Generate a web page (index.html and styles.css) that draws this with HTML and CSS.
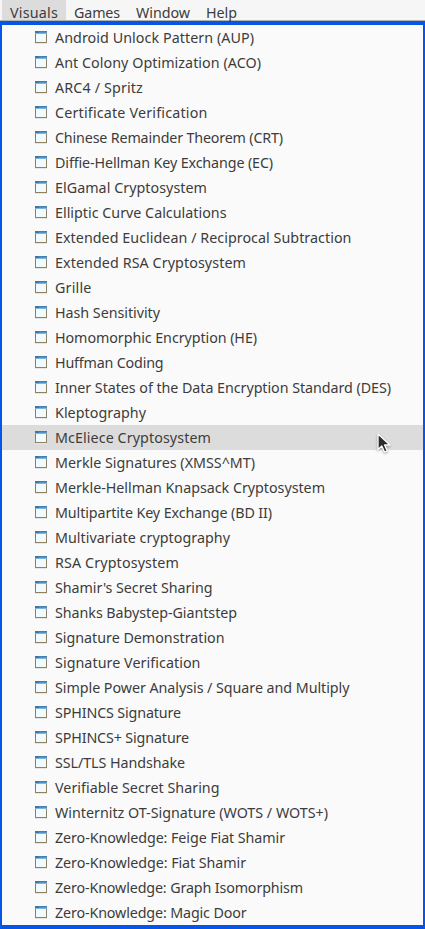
FILE: index.html
```html
<!DOCTYPE html>
<html lang="en">
<head>
<meta charset="utf-8">
<title>Visuals</title>
<link rel="stylesheet" href="styles.css">
</head>
<body>
<svg class="symbols" aria-hidden="true">
  <defs>
    <symbol id="window" viewBox="0 0 12 13">
      <rect x=".5" y=".5" width="11" height="11" fill="#f1faff" stroke="#8d8162"/>
      <rect y="3" width="1" height="4" fill="#66828a"/>
      <rect width="12" height="1" fill="#4a7fa8"/>
      <rect y="1" width="12" height="1" fill="#4f93c6"/>
      <rect y="2" width="12" height="1" fill="#7fb5dc"/>
      <rect y="0" width="4" height="2" fill="#3c77aa"/>
      <rect y="12" width="12" height="1" fill="#e8e6e1"/>
    </symbol>
  </defs>
</svg>
<nav class="menubar">
  <span class="tab active"><span class="label" data-width="48">Visuals</span></span>
  <span class="tab"><span class="label" data-width="46">Games</span></span>
  <span class="tab"><span class="label" data-width="54">Window</span></span>
  <span class="tab"><span class="label" data-width="31">Help</span></span>
</nav>
<ul class="menu" id="menu"></ul>
<svg class="cursor" width="17" height="23" viewBox="0 0 17 23">
  <path d="M2 2V17.5L5.8 14L8.5 20L11.2 18.8L8.6 13H14Z" fill="#2d2d2d" stroke="#fff" stroke-width="1.3" stroke-linejoin="round"/>
</svg>
<script src="menu.js"></script>
</body>
</html>
```
FILE: styles.css
```css
* { box-sizing: border-box; }
body {
  margin: 0;
  width: 425px;
  height: 929px;
  overflow: hidden;
  position: relative;
  background: #f6f6f6;
  color: #3c3c3c;
  font-family: "Noto Sans", "Open Sans", sans-serif;
  font-size: 14.3px;
}
.symbols { position: absolute; width: 0; height: 0; }
.menubar {
  display: flex;
  height: 21px;
  padding-left: 2px;
  border-bottom: 1px solid #b4b1a9;
}
.tab {
  display: flex;
  align-items: center;
  padding: 5px 8px 0;
}
.tab.active { background: #dcdcdc; }
.label { display: block; line-height: 20px; white-space: nowrap; }
.menu {
  margin: 0;
  padding: 0;
  height: 908px;
  list-style: none;
  background: #fafafa;
  border: solid #0556e8;
  border-width: 4px 2px;
}
.item {
  display: flex;
  align-items: center;
  height: 25px;
  padding-left: 33px;
  gap: 8px;
}
.item.selected { background: #dcdcdc; }
.icon { width: 12px; height: 13px; flex: none; }
.cursor {
  position: absolute;
  left: 376px;
  top: 432px;
  filter: drop-shadow(0 1px 1px rgba(0, 0, 0, .35));
}
```
FILE: menu.js
```js
// Each entry: label and its width in pixels.
const entries = [
  ["Android Unlock Pattern (AUP)", 199],
  ["Ant Colony Optimization (ACO)", 206],
  ["ARC4 / Spritz", 88],
  ["Certificate Verification", 152.5],
  ["Chinese Remainder Theorem (CRT)", 228],
  ["Diffie-Hellman Key Exchange (EC)", 218],
  ["ElGamal Cryptosystem", 152],
  ["Elliptic Curve Calculations", 171.5],
  ["Extended Euclidean / Reciprocal Subtraction", 296.5],
  ["Extended RSA Cryptosystem", 191],
  ["Grille", 36.5],
  ["Hash Sensitivity", 105],
  ["Homomorphic Encryption (HE)", 202],
  ["Huffman Coding", 108.5],
  ["Inner States of the Data Encryption Standard (DES)", 336],
  ["Kleptography", 91],
  ["McEliece Cryptosystem", 156],
  ["Merkle Signatures (XMSS^MT)", 200],
  ["Merkle-Hellman Knapsack Cryptosystem", 270],
  ["Multipartite Key Exchange (BD II)", 217],
  ["Multivariate cryptography", 175],
  ["RSA Cryptosystem", 124],
  ["Shamir's Secret Sharing", 157.5],
  ["Shanks Babystep-Giantstep", 182],
  ["Signature Demonstration", 169.5],
  ["Signature Verification", 145.5],
  ["Simple Power Analysis / Square and Multiply", 294.5],
  ["SPHINCS Signature", 126],
  ["SPHINCS+ Signature", 134],
  ["SSL/TLS Handshake", 130],
  ["Verifiable Secret Sharing", 164.5],
  ["Winternitz OT-Signature (WOTS / WOTS+)", 273],
  ["Zero-Knowledge: Feige Fiat Shamir", 230],
  ["Zero-Knowledge: Fiat Shamir", 191],
  ["Zero-Knowledge: Graph Isomorphism", 248],
  ["Zero-Knowledge: Magic Door", 191.5]
];
const menu = document.getElementById("menu");
for (const [text, width] of entries) {
  const row = document.createElement("li");
  row.className = "item" + (text === "McEliece Cryptosystem" ? " selected" : "");
  row.innerHTML = '<svg class="icon"><use href="#window"/></svg><span class="label"></span>';
  const label = row.lastChild;
  label.textContent = text;
  label.dataset.width = width;
  menu.append(row);
}
// Track every label so that it fills its width.
for (const label of document.querySelectorAll(".label")) {
  const target = Number(label.dataset.width);
  const natural = label.getBoundingClientRect().width;
  label.style.letterSpacing = (target - natural) / label.textContent.length + "px";
}
```
